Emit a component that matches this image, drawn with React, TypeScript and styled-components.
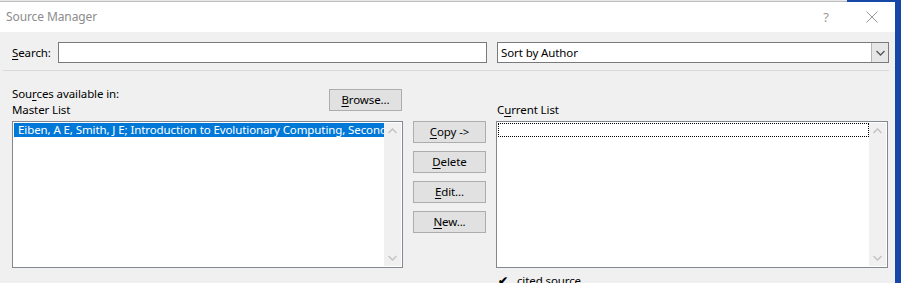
import React from "react";
import styled, { createGlobalStyle } from "styled-components";

const Global = createGlobalStyle`
  html, body { margin: 0; padding: 0; background: #f0f0f0; }
  body { font-family: "Noto Sans", "Open Sans", sans-serif; }
`;

const Page = styled.div`
  width: 901px;
  height: 283px;
  overflow: hidden;
  display: flex;
  flex-direction: column;
  font-family: "Noto Sans", "Open Sans", sans-serif;
  font-size: 11.5px;
  letter-spacing: -0.1px;
  color: #000;
`;

const TopStrip = styled.div`
  height: 2px;
  display: flex;
  flex: none;
`;

const Backdrop = styled.div`
  flex: 1;
  background: #bdbdbd;
  border-top: 1px solid #e8e8e8;
`;

const BlueCorner = styled.div`
  width: 54px;
  background: #1747a6;
`;

const MainRow = styled.div`
  flex: 1;
  display: flex;
`;

const Dialog = styled.div`
  flex: 1;
  display: flex;
  flex-direction: column;
  background: #f0f0f0;
`;

const BlueEdge = styled.div`
  width: 6px;
  background: #1747a6;
`;

const TitleBar = styled.div`
  height: 30px;
  background: #fff;
  display: flex;
  align-items: center;
  padding-left: 6px;
  flex: none;
`;

const Title = styled.div`
  flex: 1;
  color: #8c8c8c;
  font-size: 12px;
  padding-bottom: 1px;
`;

const TitleIcon = styled.div`
  width: 46px;
  height: 30px;
  display: flex;
  align-items: center;
  justify-content: center;
  color: #999;
  font-size: 13px;
`;

const Content = styled.div`
  padding: 10px 6px 0 12px;
  display: flex;
  flex-direction: column;
`;

const SearchRow = styled.div`
  display: flex;
  align-items: center;
  height: 21px;
`;

const Label = styled.span`
  line-height: 16px;
  white-space: nowrap;
`;

const SearchLabel = styled(Label)`
  width: 46px;
  padding-top: 1px;
`;

const TextBox = styled.div`
  width: 429px;
  height: 21px;
  box-sizing: border-box;
  background: #fff;
  border: 1px solid #7a7a7a;
`;

const Combo = styled.div`
  margin-left: 10px;
  width: 392px;
  height: 21px;
  box-sizing: border-box;
  background: #fff;
  border: 1px solid #7a7a7a;
  display: flex;
  align-items: center;
`;

const ComboText = styled.span`
  flex: 1;
  padding-left: 3px;
  line-height: 16px;
`;

const ComboButton = styled.div`
  width: 17px;
  height: 19px;
  box-sizing: border-box;
  background: #e6e6e6;
  border-left: 1px solid #b5b5b5;
  display: flex;
  align-items: center;
  justify-content: center;
`;

const Separator = styled.div`
  margin: 7px 0 0 -9px;
  height: 1px;
  background: #d9d9d9;
  width: 886px;
`;

const Grid = styled.div`
  margin-top: 14px;
  display: grid;
  grid-template-columns: 391px 73px 392px;
  column-gap: 10px;
  grid-template-rows: 36px 147px auto;
`;

const HeaderLeft = styled.div`
  display: flex;
  justify-content: space-between;
  align-items: flex-start;
`;

const LabelStack = styled.div`
  display: flex;
  flex-direction: column;
  padding-top: 1px;
`;

const HeaderRight = styled.div`
  grid-column: 3;
  display: flex;
  align-items: flex-end;
  padding-bottom: 3px;
  padding-left: 1px;
`;

const Button = styled.div`
  width: 73px;
  height: 22px;
  box-sizing: border-box;
  background: #e1e1e1;
  border: 1px solid #adadad;
  display: flex;
  align-items: center;
  justify-content: center;
  line-height: 16px;
`;

const BrowseButton = styled(Button)`
  margin-top: 4px;
  margin-right: 1px;
`;

const ListBox = styled.div`
  box-sizing: border-box;
  height: 147px;
  border: 1px solid #828790;
  background: #fff;
  display: flex;
  padding: 1px;
`;

const ListItems = styled.div`
  flex: 1;
  min-width: 0;
`;

const ListItem = styled.div<{ $selected?: boolean; $focus?: boolean }>`
  height: 14px;
  line-height: 14px;
  padding-left: 4px;
  white-space: nowrap;
  overflow: hidden;
  background: ${(p) => (p.$selected ? "#0078d7" : "transparent")};
  color: ${(p) => (p.$selected ? "#fff" : "#000")};
  outline: ${(p) => (p.$focus ? "1px dotted #000" : "none")};
  outline-offset: -1px;
`;

const ScrollBar = styled.div`
  width: 17px;
  background: #f0f0f0;
  display: flex;
  flex-direction: column;
  justify-content: space-between;
  align-items: center;
  padding: 5px 0 5px;
`;

const ButtonColumn = styled.div`
  display: flex;
  flex-direction: column;
  gap: 8px;
`;

const Footer = styled.div`
  grid-column: 3;
  display: flex;
  align-items: flex-start;
  padding: 5px 0 0 2px;
  gap: 9px;
`;

const Check = styled.span`
  font-size: 12px;
  font-weight: bold;
  line-height: 16px;
`;

const U = styled.span`
  text-decoration: underline;
  text-underline-offset: 2px;
`;

const Chevron = ({ up, color = "#c2c2c2" }: { up?: boolean; color?: string }) => (
  <svg width="9" height="6" viewBox="0 0 9 6">
    <path
      d={up ? "M0.5 5 L4.5 1 L8.5 5" : "M0.5 1 L4.5 5 L8.5 1"}
      fill="none"
      stroke={color}
      strokeWidth="1.3"
    />
  </svg>
);

const CloseIcon = () => (
  <svg width="12" height="12" viewBox="0 0 12 12">
    <path d="M0.5 0.5 L11.5 11.5 M11.5 0.5 L0.5 11.5" stroke="#999" strokeWidth="1" />
  </svg>
);

export default function App() {
  return (
    <Page>
      <Global />
      <TopStrip>
        <Backdrop />
        <BlueCorner />
      </TopStrip>
      <MainRow>
        <Dialog>
          <TitleBar>
            <Title>Source Manager</Title>
            <TitleIcon>?</TitleIcon>
            <TitleIcon>
              <CloseIcon />
            </TitleIcon>
          </TitleBar>
          <Content>
            <SearchRow>
              <SearchLabel>
                <U>S</U>earch:
              </SearchLabel>
              <TextBox />
              <Combo>
                <ComboText>Sort by Author</ComboText>
                <ComboButton>
                  <Chevron color="#555" />
                </ComboButton>
              </Combo>
            </SearchRow>
            <Separator />
            <Grid>
              <HeaderLeft>
                <LabelStack>
                  <Label>
                    Sou<U>r</U>ces available in:
                  </Label>
                  <Label>Master List</Label>
                </LabelStack>
                <BrowseButton>
                  <span>
                    <U>B</U>rowse...
                  </span>
                </BrowseButton>
              </HeaderLeft>
              <HeaderRight>
                <Label>
                  C<U>u</U>rrent List
                </Label>
              </HeaderRight>
              <ListBox>
                <ListItems>
                  <ListItem $selected>
                    Eiben, A E, Smith, J E; Introduction to Evolutionary Computing, Second Edition
                  </ListItem>
                </ListItems>
                <ScrollBar>
                  <Chevron up />
                  <Chevron />
                </ScrollBar>
              </ListBox>
              <ButtonColumn>
                <Button>
                  <span>
                    <U>C</U>opy -&gt;
                  </span>
                </Button>
                <Button>
                  <span>
                    <U>D</U>elete
                  </span>
                </Button>
                <Button>
                  <span>
                    <U>E</U>dit...
                  </span>
                </Button>
                <Button>
                  <span>
                    <U>N</U>ew...
                  </span>
                </Button>
              </ButtonColumn>
              <ListBox>
                <ListItems>
                  <ListItem $focus />
                </ListItems>
                <ScrollBar>
                  <Chevron up />
                  <Chevron />
                </ScrollBar>
              </ListBox>
              <Footer>
                <Check>✔</Check>
                <Label>cited source</Label>
              </Footer>
            </Grid>
          </Content>
        </Dialog>
        <BlueEdge />
      </MainRow>
    </Page>
  );
}
